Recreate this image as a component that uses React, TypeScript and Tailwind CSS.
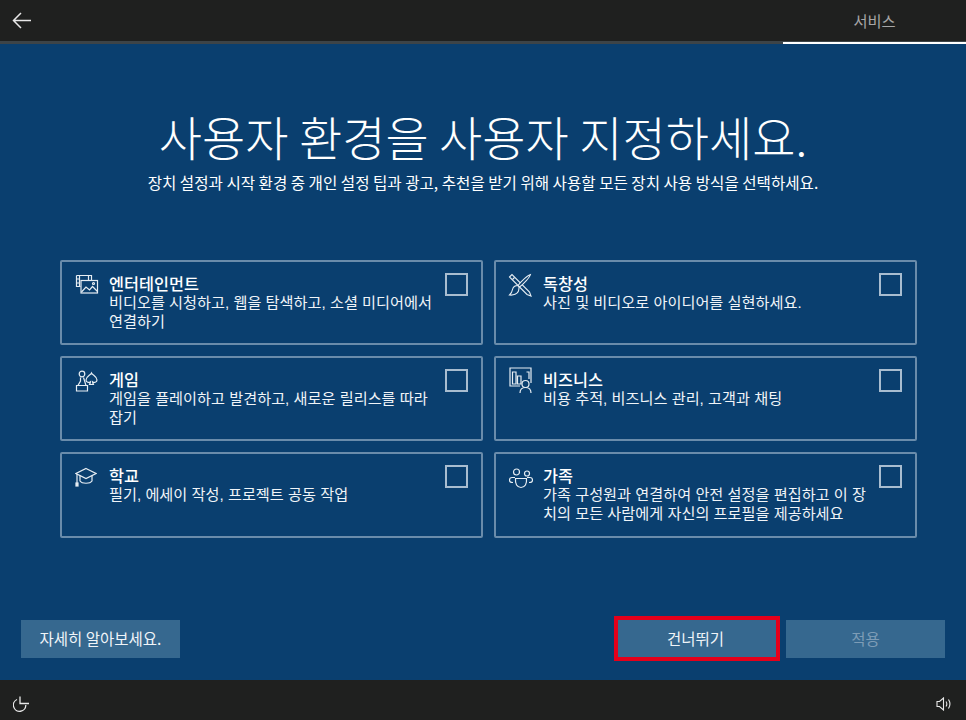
const F = "font-['Noto_Sans_CJK_KR','Noto_Sans',sans-serif]";

const s = { fill: "none", stroke: "currentColor", strokeWidth: 1.2 };

function IconMedia() {
  return (
    <svg width="24" height="22" viewBox="0 0 24 22" {...s}>
      <path d="M1.500 1.500H16.500V6M1.500 1.500V12.500H5.500M4.500 1.500V12.500M1.500 5H4.500M1.500 9H4.500M13.500 1.500V6" />
      <rect x="6" y="6.500" width="16.500" height="12.500" />
      <path d="M6.500 18l4.500-5 3.500 3 3-3.500 5 5" />
      <circle cx="18.500" cy="9.500" r="1" />
    </svg>
  );
}
function IconGame() {
  return (
    <svg width="24" height="24" viewBox="0 0 24 24" {...s}>
      <circle cx="7" cy="4" r="2.800" />
      <path d="M5.500 7.500v3.500L3 15.500h8L8.500 7.500M1.500 21v-5.500h11V21z" />
      <path d="M16.500 3c1 2.200 5.500 3.500 5.500 7 0 2.500-3 3-4.500 1.800 0 1.200.5 2.200 1.500 2.700h-5c1-.5 1.500-1.500 1.500-2.700-1.500 1.200-4.500.7-4.500-1.800 0-3.500 4.500-4.800 5.500-7z" />
    </svg>
  );
}
function IconSchool() {
  return (
    <svg width="22" height="20" viewBox="0 0 22 20" className="mt-[1px]" {...s}>
      <path d="M11 1.500L21 6.500 11 11.500 1 6.500z" />
      <path d="M5 8.500V14c2 3 10 3 12 0V8.500" />
      <path d="M2 7v9" />
      <rect x="1" y="16" width="2" height="3" fill="currentColor" />
    </svg>
  );
}
function IconCreate() {
  return (
    <svg width="24" height="24" viewBox="0 0 24 24" className="-mt-[1px] -ml-[1px]" fill="none" stroke="currentColor" strokeWidth="1.100">
      <path d="M1.500 4 4 1.500 21.500 19 23 23 19 21.500z" />
      <path d="M4.500 6.500 6.500 4.500" />
      <path d="M22.500 1.500c-2.500.5-9.500 7-12.500 11l1.500 1.500c4-3 10.500-10 11-12.500z" fill="#0a3f6f" />
      <path d="M10 12.500c-3 0-5 1.500-5.500 4-.3 2-1.500 4-3 5.500 4 .5 8-1 9-4 .5-1.500.5-2.500.5-4z" fill="#0a3f6f" />
    </svg>
  );
}
function IconBusiness() {
  return (
    <svg width="23" height="27" viewBox="0 0 23 27" className="-mt-[3px]" {...s}>
      <path d="M11 19H1V1h21v15" />
      <path d="M3.500 5h3.500v12H3.500zM8.500 9H12v8H8.500zM17.500 5H20v7" />
      <circle cx="16.500" cy="17" r="3.500" fill="#0a3f6f" />
      <path d="M11 26c0-3.500 2-5.500 5.500-5.500S22 22.500 22 26" />
    </svg>
  );
}
function IconFamily() {
  return (
    <svg width="24" height="24" viewBox="0 0 24 22" className="mt-[1px]" {...s}>
      <circle cx="7.500" cy="4" r="3" />
      <circle cx="18" cy="5.500" r="2.500" />
      <path d="M6 9.500H3c-1.500 0-2.500 1-2.500 2.500 0 1.500 1 2.500 3.500 2.500" />
      <path d="M18 9.500h3c1.500 0 2.500 1 2.500 2.500 0 1.500-1 2.500-3.500 2.500" />
      <path d="M6.500 10.500h11c.500 5.500-1.500 9-5.500 9s-6-3.500-5.500-9z" />
    </svg>
  );
}

function Card({ icon, title, lines }: { icon: React.ReactNode; title: string; lines: string[] }) {
  return (
    <div className="flex border-2 border-[#6a8cab] rounded-[2px] pl-[13px] pr-[13px] pt-[12px] text-white h-full">
      <div className="w-[34px] shrink-0 text-[#e6edf3]">{icon}</div>
      <div className="flex-1 min-w-0 font-['Liberation_Sans','Noto_Sans_CJK_KR',sans-serif]">
        <div className="text-[16.300px] pt-[2px] leading-[17px] font-medium">{title}</div>
        {lines.map((l) => (
          <div key={l} className="text-[15.200px] leading-[19px] whitespace-nowrap text-[#f0f4f8]">{l}</div>
        ))}
      </div>
      <div className="w-[23px] h-[23px] shrink-0 border-2 border-[#a9bdd0] -mt-[1px]" />
    </div>
  );
}

export default function App() {
  return (
    <div className={`w-[966px] h-[720px] flex flex-col overflow-hidden bg-[#0a3f6f] ${F}`}>
      <header className="h-[44px] shrink-0 flex bg-[#1f201f] border-b-[3px] border-[#3d4448] relative">
        <div className="flex-1 flex items-center pl-[12px] text-[#e8e8e8]">
          <svg width="20" height="17" viewBox="0 0 20 17" fill="none" stroke="currentColor" strokeWidth="1.500">
            <path d="M9 1 1.500 8.500 9 16M1.500 8.500H19" />
          </svg>
        </div>
        <div className="w-[183px] flex items-center justify-center text-[15.300px] text-[#a6a6a6] pb-[1px] -mb-[3px] border-b-[2px] border-white">
          서비스
        </div>
      </header>

      <main className="flex-1 flex flex-col items-center min-h-0">
        <h1 className="mt-[61px] text-[47px] leading-[62px] font-light text-white whitespace-nowrap">
          사용자 환경을 사용자 지정하세요.
        </h1>
        <p className="text-[15.600px] leading-[20px] mt-[5px] text-white whitespace-nowrap">
          장치 설정과 시작 환경 중 개인 설정 팁과 광고, 추천을 받기 위해 사용할 모든 장치 사용 방식을 선택하세요.
        </p>

        <div className="mt-[68px] self-start ml-[60px] w-[857px] grid grid-cols-2 gap-x-[11px] gap-y-[11px] grid-rows-[85px_85px_86px]">
          <Card icon={<IconMedia />} title="엔터테인먼트" lines={["비디오를 시청하고, 웹을 탐색하고, 소셜 미디어에서", "연결하기"]} />
          <Card icon={<IconCreate />} title="독창성" lines={["사진 및 비디오로 아이디어를 실현하세요."]} />
          <Card icon={<IconGame />} title="게임" lines={["게임을 플레이하고 발견하고, 새로운 릴리스를 따라", "잡기"]} />
          <Card icon={<IconBusiness />} title="비즈니스" lines={["비용 추적, 비즈니스 관리, 고객과 채팅"]} />
          <Card icon={<IconSchool />} title="학교" lines={["필기, 에세이 작성, 프로젝트 공동 작업"]} />
          <Card icon={<IconFamily />} title="가족" lines={["가족 구성원과 연결하여 안전 설정을 편집하고 이 장", "치의 모든 사람에게 자신의 프로필을 제공하세요"]} />
        </div>

        <div className="mt-auto mb-[19px] w-[924px] flex items-center">
          <button className="w-[159px] h-[38px] bg-[#36688f] text-[#f0f4f8] text-[15.500px]">자세히 알아보세요.</button>
          <button className="ml-auto w-[166px] h-[45px] border-[4px] border-[#e5001a] bg-[#36688f] text-[#f0f4f8] text-[15.500px] pr-[3px]">건너뛰기</button>
          <button className="ml-[6px] w-[159px] h-[38px] bg-[#36688f] text-[#7d9cb6] text-[15.500px]">적용</button>
        </div>
      </main>

      <footer className="h-[40px] shrink-0 bg-[#1f201f] flex items-start justify-between pt-[16px] pl-[13px] pr-[15px] text-[#e8e8e8]">
        <svg width="16" height="16" viewBox="0 0 16 16" fill="none" stroke="currentColor" strokeWidth="1.300">
          <path d="M4 3.500A6.200 6.200 0 1 0 12.800 9" />
          <path d="M7 0.500V7.500H16" />
        </svg>
        <svg width="15" height="14" viewBox="0 0 15 14" fill="none" stroke="currentColor" strokeWidth="1.100" className="mt-[1px]">
          <path d="M1 4.500h2.500L7.500 1v12L3.500 9.500H1z" />
          <path d="M10 4.500c1 1.500 1 3.500 0 5M12.500 2.500c1.800 2.800 1.800 6.200 0 9" />
        </svg>
      </footer>
    </div>
  );
}
